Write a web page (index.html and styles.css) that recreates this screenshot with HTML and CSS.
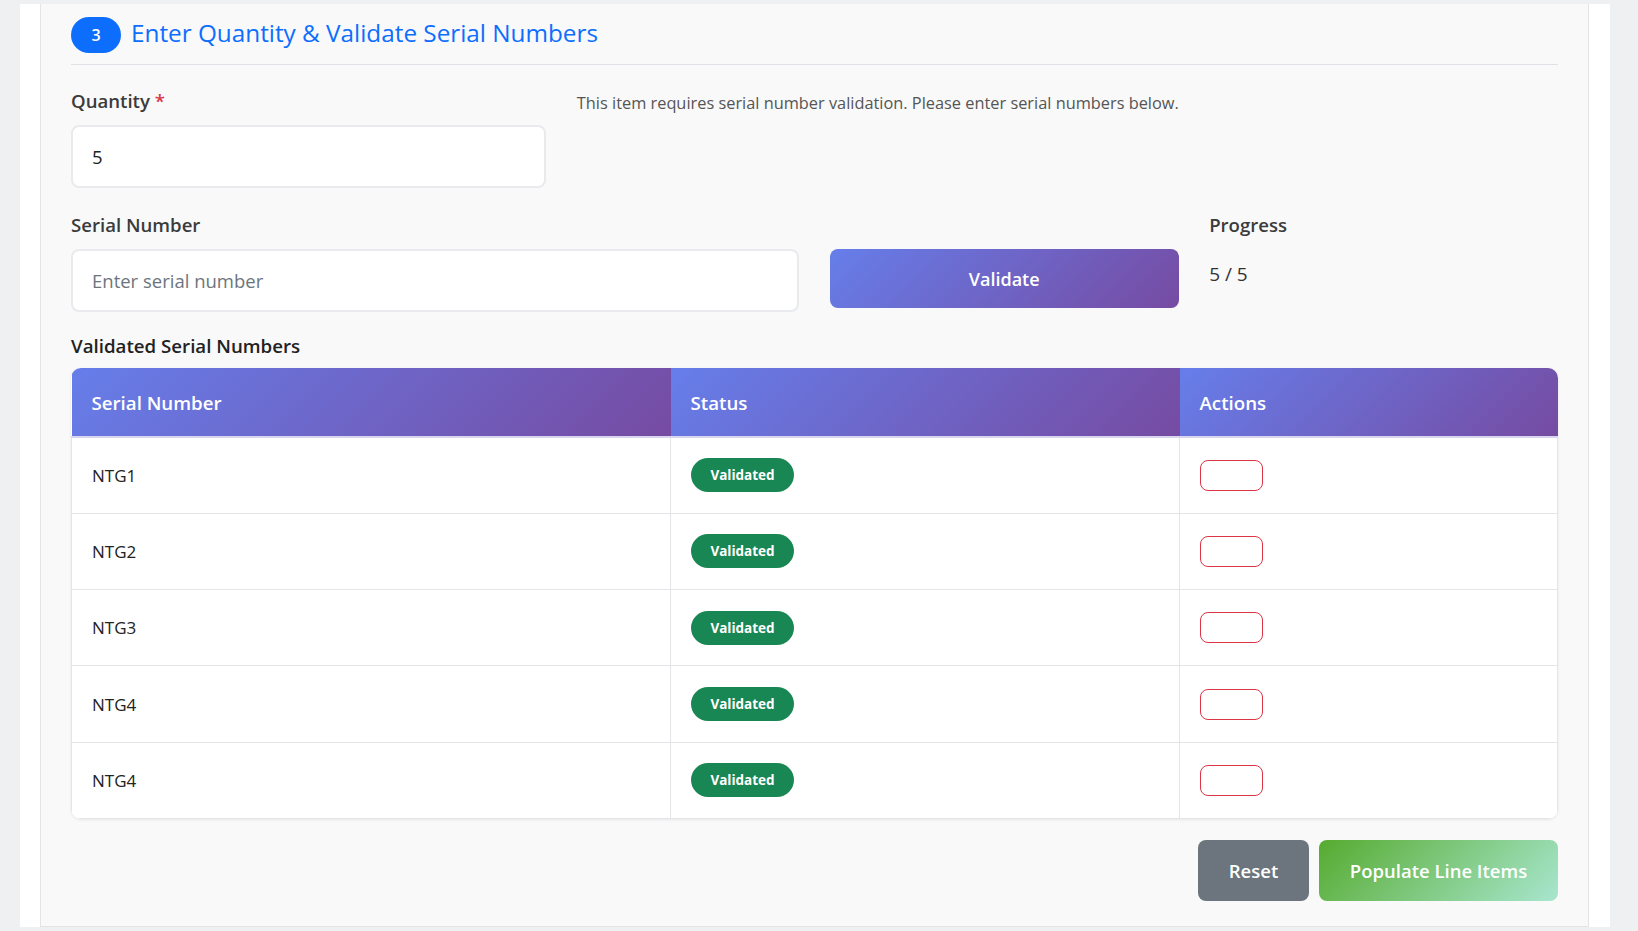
FILE: index.html
```html
<!DOCTYPE html>
<html lang="en">
<head>
<meta charset="utf-8">
<title>Enter Quantity &amp; Validate Serial Numbers</title>
<link rel="stylesheet" href="styles.css">
</head>
<body>
<div class="shell">
  <section class="card">
    <header class="step-head">
      <span class="step-pill">3</span>
      <h2 class="step-title">Enter Quantity &amp; Validate Serial Numbers</h2>
    </header>

    <div class="grid row-qty">
      <div class="col-4">
        <label class="field-label">Quantity <span class="req">*</span></label>
        <div class="input">5</div>
      </div>
      <div class="col-8">
        <p class="info">This item requires serial number validation. Please enter serial numbers below.</p>
      </div>
    </div>

    <div class="grid row-serial">
      <div class="col-6">
        <label class="field-label">Serial Number</label>
        <div class="input placeholder">Enter serial number</div>
      </div>
      <div class="col-3 validate-col">
        <button class="btn btn-validate">Validate</button>
      </div>
      <div class="col-3">
        <label class="field-label">Progress</label>
        <div class="progress-val">5 / 5</div>
      </div>
    </div>

    <h3 class="table-title">Validated Serial Numbers</h3>
    <div class="table-wrap">
      <table class="serials">
        <colgroup><col class="c1"><col class="c2"><col class="c3"></colgroup>
        <thead>
          <tr><th>Serial Number</th><th>Status</th><th>Actions</th></tr>
        </thead>
        <tbody>
          <tr><td>NTG1</td><td><span class="badge">Validated</span></td><td><button class="btn-del"></button></td></tr>
          <tr><td>NTG2</td><td><span class="badge">Validated</span></td><td><button class="btn-del"></button></td></tr>
          <tr><td>NTG3</td><td><span class="badge">Validated</span></td><td><button class="btn-del"></button></td></tr>
          <tr><td>NTG4</td><td><span class="badge">Validated</span></td><td><button class="btn-del"></button></td></tr>
          <tr><td>NTG4</td><td><span class="badge">Validated</span></td><td><button class="btn-del"></button></td></tr>
        </tbody>
      </table>
    </div>

    <div class="actions">
      <button class="btn btn-reset">Reset</button>
      <button class="btn btn-populate">Populate Line Items</button>
    </div>
  </section>
</div>
</body>
</html>
```

FILE: styles.css
```css
* { box-sizing: border-box; }
html, body { margin: 0; padding: 0; }
body {
  background: #eff0f2;
  font-family: "Open Sans", "Noto Sans", sans-serif;
  color: #333;
  height: 931px;
  overflow: hidden;
  padding-top: 4px;
}
.shell {
  margin-left: 20px;
  width: 1590px;
  background: #fff;
  padding: 0 21px 0 20px;
}
.card {
  background: #f9f9f9;
  border: 1px solid #e4e4e4;
  border-top: none;
  padding: 13px 30px 25px;
}
.step-head {
  display: flex;
  align-items: center;
  gap: 10px;
  border-bottom: 1px solid #dee2e6;
  padding-bottom: 11px;
}
.step-pill {
  width: 50px;
  height: 36px;
  border-radius: 18px;
  background: #0d6efd;
  color: #fff;
  font-size: 16px;
  font-weight: 600;
  display: flex;
  align-items: center;
  justify-content: center;
}
.step-title {
  margin: 0;
  color: #0d6efd;
  font-size: 24.3px;
  font-weight: 500;
  line-height: 1;
  position: relative;
  top: -2px;
}
.grid {
  display: grid;
  grid-template-columns: repeat(12, 1fr);
  column-gap: 30.5px;
}
.col-3 { grid-column: span 3; }
.col-4 { grid-column: span 4; }
.col-6 { grid-column: span 6; }
.col-8 { grid-column: span 8; }
.row-qty { margin-top: 23px; }
.row-serial { margin-top: 24px; }
.field-label {
  display: block;
  font-size: 18.6px;
  font-weight: 600;
  color: #3b3b3b;
  line-height: 26px;
  margin-bottom: 11px;
}
.req { color: #dc3545; }
.input {
  height: 63px;
  background: #fff;
  border: 2px solid #e8eaed;
  border-radius: 8px;
  padding: 0 19px;
  display: flex;
  align-items: center;
  font-size: 18.5px;
  color: #222;
}
.placeholder { color: #6c757d; }
.info {
  margin: 3px 0 0;
  font-size: 16.35px;
  line-height: 24px;
  color: #555;
}
.validate-col { padding-top: 37px; }
.btn {
  border: none;
  font-family: inherit;
  color: #fff;
  cursor: pointer;
}
.btn-validate {
  width: 100%;
  height: 59px;
  border-radius: 8px;
  background: linear-gradient(135deg, #667eea 0%, #764ba2 100%);
  font-size: 18px;
  font-weight: 600;
}
.progress-val {
  font-size: 19px;
  line-height: 24px;
  color: #333;
  padding-top: 13px;
}
.table-title {
  margin: 21px 0 9px;
  font-size: 18.7px;
  font-weight: 600;
  color: #222;
  line-height: 26px;
}
.table-wrap {
  border-radius: 10px;
  overflow: hidden;
  background: #fff;
  box-shadow: 0 1px 3px rgba(0,0,0,0.08);
}
.serials {
  width: 100%;
  border-collapse: collapse;
  table-layout: fixed;
}
.c1 { width: 599px; }
.c2 { width: 509px; }
.serials th {
  height: 69px;
  text-align: left;
  padding: 0 20px;
  color: #fff;
  font-size: 18.7px;
  font-weight: 600;
  background: linear-gradient(135deg, #667eea 0%, #764ba2 100%);
  border-bottom: 2px solid #d8d6ee;
}
.serials td {
  height: 76.3px;
  padding: 0 20px;
  font-size: 17px;
  color: #222;
  border: 1px solid #e3e5e8;
  border-top: none;
}
.badge {
  display: inline-flex;
  align-items: center;
  justify-content: center;
  width: 103px;
  height: 34px;
  border-radius: 17px;
  background: #198754;
  color: #fff;
  font-size: 13.5px;
  font-weight: 700;
}
.btn-del {
  display: block;
  width: 63px;
  height: 31px;
  border: 1px solid #dc3545;
  border-radius: 8px;
  background: #fff;
}
.actions {
  display: flex;
  justify-content: flex-end;
  gap: 10px;
  margin-top: 21px;
}
.btn-reset, .btn-populate {
  height: 61px;
  border-radius: 8px;
  font-size: 18.5px;
  font-weight: 600;
}
.btn-reset { width: 111px; background: #6c757d; }
.btn-populate { width: 239px; background: linear-gradient(135deg, #56ab2f 0%, #a8e6cf 100%); }
```
